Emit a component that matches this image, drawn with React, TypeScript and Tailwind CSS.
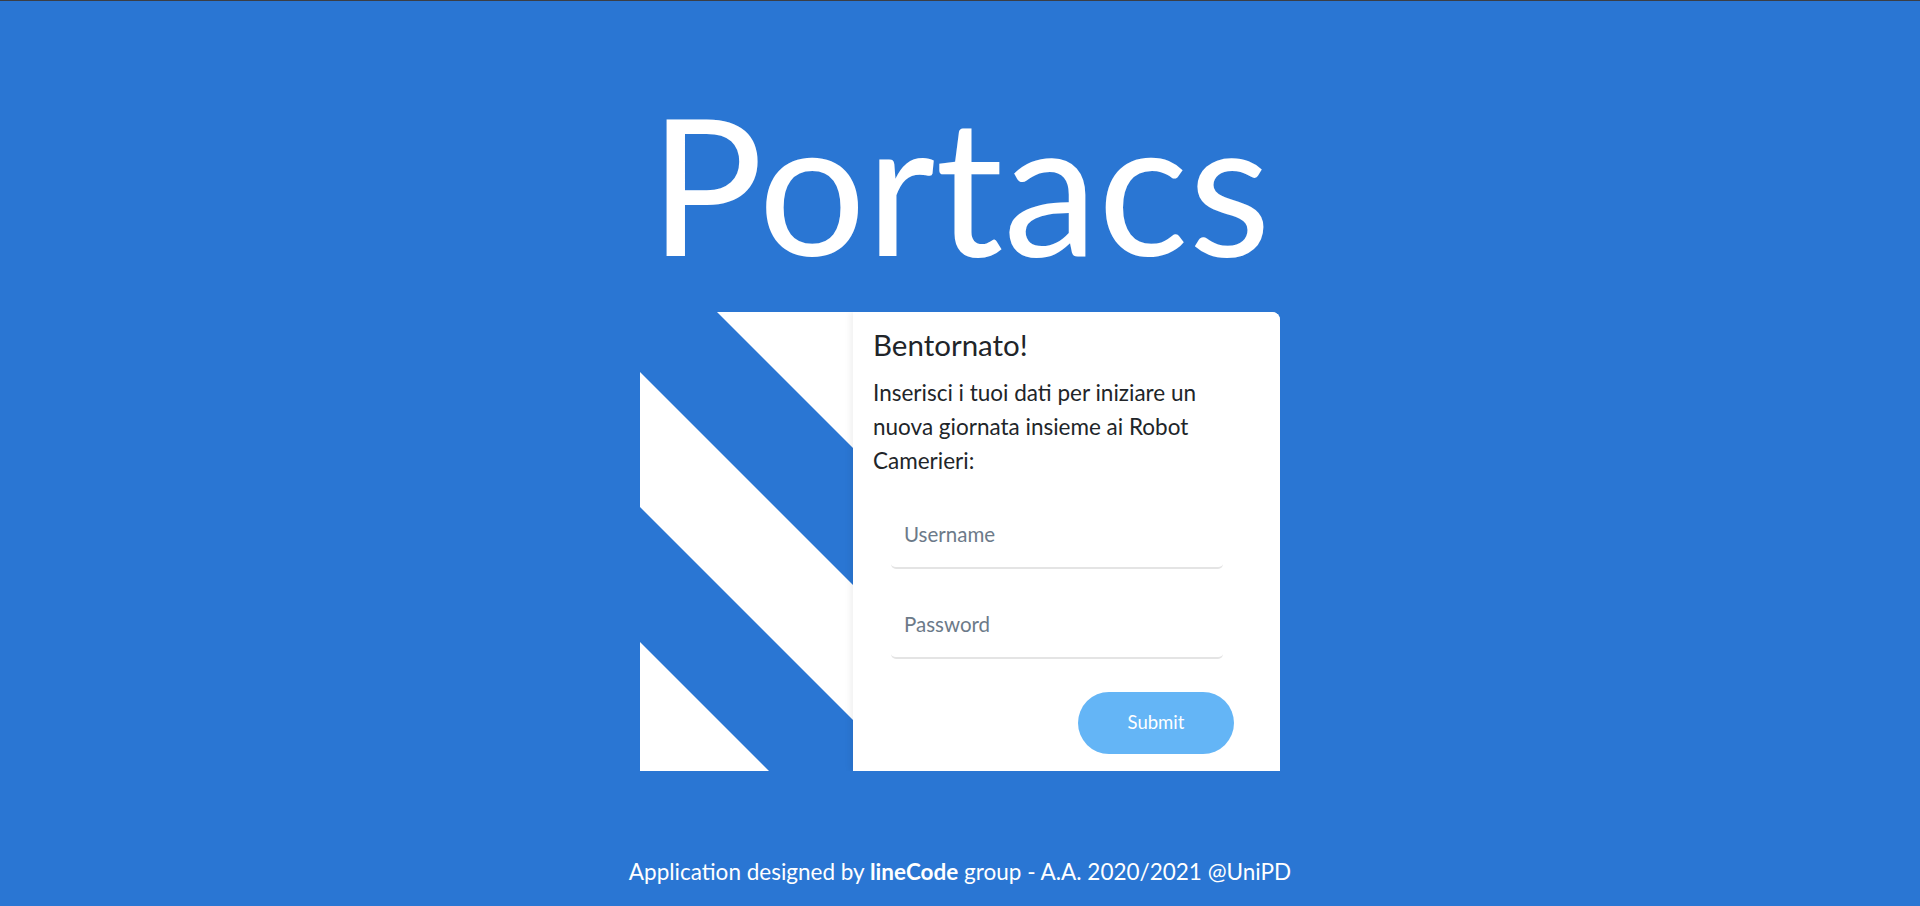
export default function App() {
  return (
    <div className="min-h-screen bg-[#2a76d3] border-t border-[#3b3e44] flex flex-col items-center font-['Lato',sans-serif]">
      <h1 className="mt-[86px] text-[190px] leading-none font-normal text-white">Portacs</h1>

      <div className="mt-[35px] w-[640px] h-[459px] flex bg-white rounded-tr-lg overflow-hidden">
        <div className="w-[213px] shrink-0">
          <svg width="213" height="459" viewBox="0 0 213 459" className="block">
            <polygon points="0,0 77,0 213,136 213,273 0,60" fill="#2a76d3" />
            <polygon points="0,195 213,408 213,459 129,459 0,330" fill="#2a76d3" />
          </svg>
        </div>

        <div className="relative flex-1 bg-white pl-5 pt-[15px] shadow-[-3px_0_6px_rgba(0,0,0,0.06)]">
          <h4 className="text-[29.5px] leading-[36px] text-[#212529]">Bentornato!</h4>
          <p className="mt-[13px] w-[350px] text-[22.5px] leading-[34px] text-[#212529]">
            Inserisci i tuoi dati per iniziare un nuova giornata insieme ai Robot Camerieri:
          </p>

          <form className="mt-[31px] ml-[18px] w-[332px] flex flex-col gap-[30px]">
            <input
              type="text"
              placeholder="Username"
              className="h-[60px] w-full px-[13px] pb-[8px] rounded-[5px] border-b-2 border-[#e4e4e4] text-[20.5px] text-[#495057] placeholder:text-[#6c7a89] outline-none"
            />
            <input
              type="password"
              placeholder="Password"
              className="h-[60px] w-full px-[13px] pb-[8px] rounded-[5px] border-b-2 border-[#e4e4e4] text-[20.5px] text-[#495057] placeholder:text-[#6c7a89] outline-none"
            />
          </form>

          <div className="mt-[33px] mr-[46px] flex justify-end">
            <button
              type="button"
              className="w-[156px] h-[62px] rounded-full bg-[#64b5f6] text-white text-[18.5px]"
            >
              Submit
            </button>
          </div>
        </div>
      </div>

      <footer className="mt-[84px] text-[22.5px] text-white">
        Application designed by <b>lineCode</b> group - A.A. 2020/2021 @UniPD
      </footer>
    </div>
  );
}
